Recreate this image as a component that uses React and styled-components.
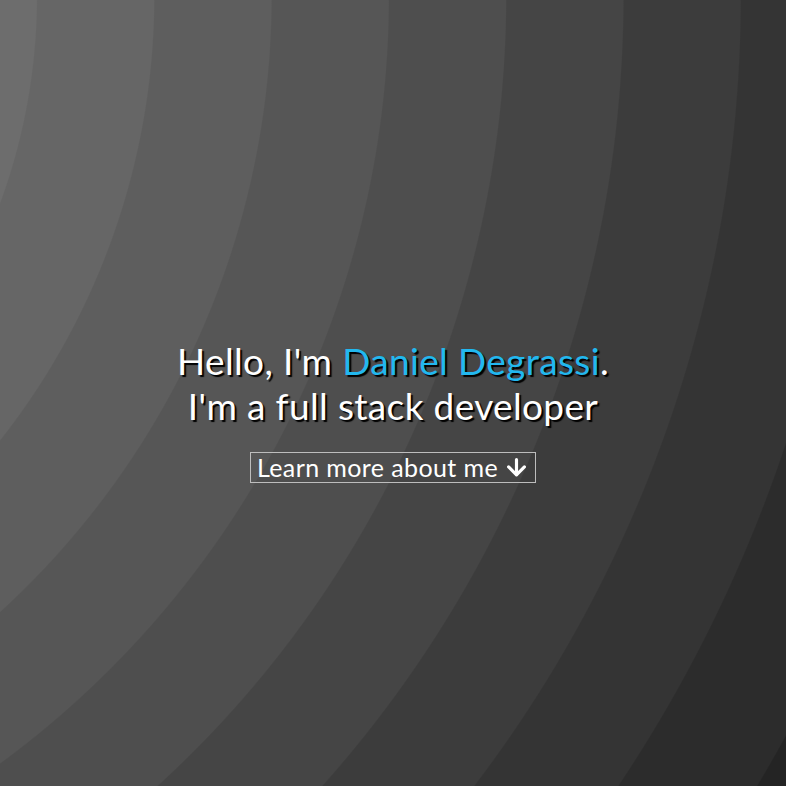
import React from 'react';
import styled, { createGlobalStyle } from 'styled-components';

const GlobalStyle = createGlobalStyle`
  * { box-sizing: border-box; }
  html, body { margin: 0; padding: 0; }
  body {
    background: #242424;
    font-family: Lato, "Open Sans", sans-serif;
  }
`;

// ring colours, lightest in the top-left corner
const rings = [
  '#6d6d6d', '#666666', '#5e5e5e', '#565656', '#4e4e4e',
  '#454545', '#3c3c3c', '#343434', '#2c2c2c', '#242424',
];

const ringStops = () => {
  const first = 600;
  const step = 117.3;
  return rings
    .map((c, i) => {
      const from = i === 0 ? 0 : first + (i - 1) * step + 0.6;
      const to = first + i * step - 0.6;
      return i === rings.length - 1 ? `${c} ${from}px` : `${c} ${from}px ${to}px`;
    })
    .join(', ');
};

const Hero = styled.section`
  min-height: 100vh;
  display: flex;
  flex-direction: column;
  align-items: center;
  justify-content: center;
  padding-top: 34px;
  background: radial-gradient(circle at -563px -4px, ${ringStops()});
`;

const Heading = styled.h1`
  margin: 0;
  font-weight: 400;
  font-size: 37px;
  line-height: 45px;
  letter-spacing: 0.35px;
  color: #ffffff;
  text-align: center;
  text-shadow: 2px 2px 1px #000;
`;

const Name = styled.span`
  color: #22b8ef;
`;

const LearnButton = styled.a`
  margin-top: 24px;
  display: inline-flex;
  align-items: center;
  gap: 8px;
  height: 31px;
  padding: 0 8px 0 6px;
  border: 1px solid #bdbdbd;
  color: #ffffff;
  font-size: 25px;
  letter-spacing: 0.4px;
  text-decoration: none;
  cursor: pointer;
`;

const Arrow = () => (
  <svg width="21" height="19" viewBox="0 0 20 18" fill="none" stroke="#fff" strokeWidth="3" strokeLinecap="round" strokeLinejoin="round">
    <path d="M10 1.5v14" />
    <path d="M2.5 8.5 10 16l7.5-7.5" />
  </svg>
);

export default function App() {
  return (
    <>
      <GlobalStyle />
      <Hero>
        <Heading>
          Hello, I'm <Name>Daniel Degrassi</Name>.
          <br />
          I'm a full stack developer
        </Heading>
        <LearnButton href="#about">
          Learn more about me <Arrow />
        </LearnButton>
      </Hero>
    </>
  );
}
